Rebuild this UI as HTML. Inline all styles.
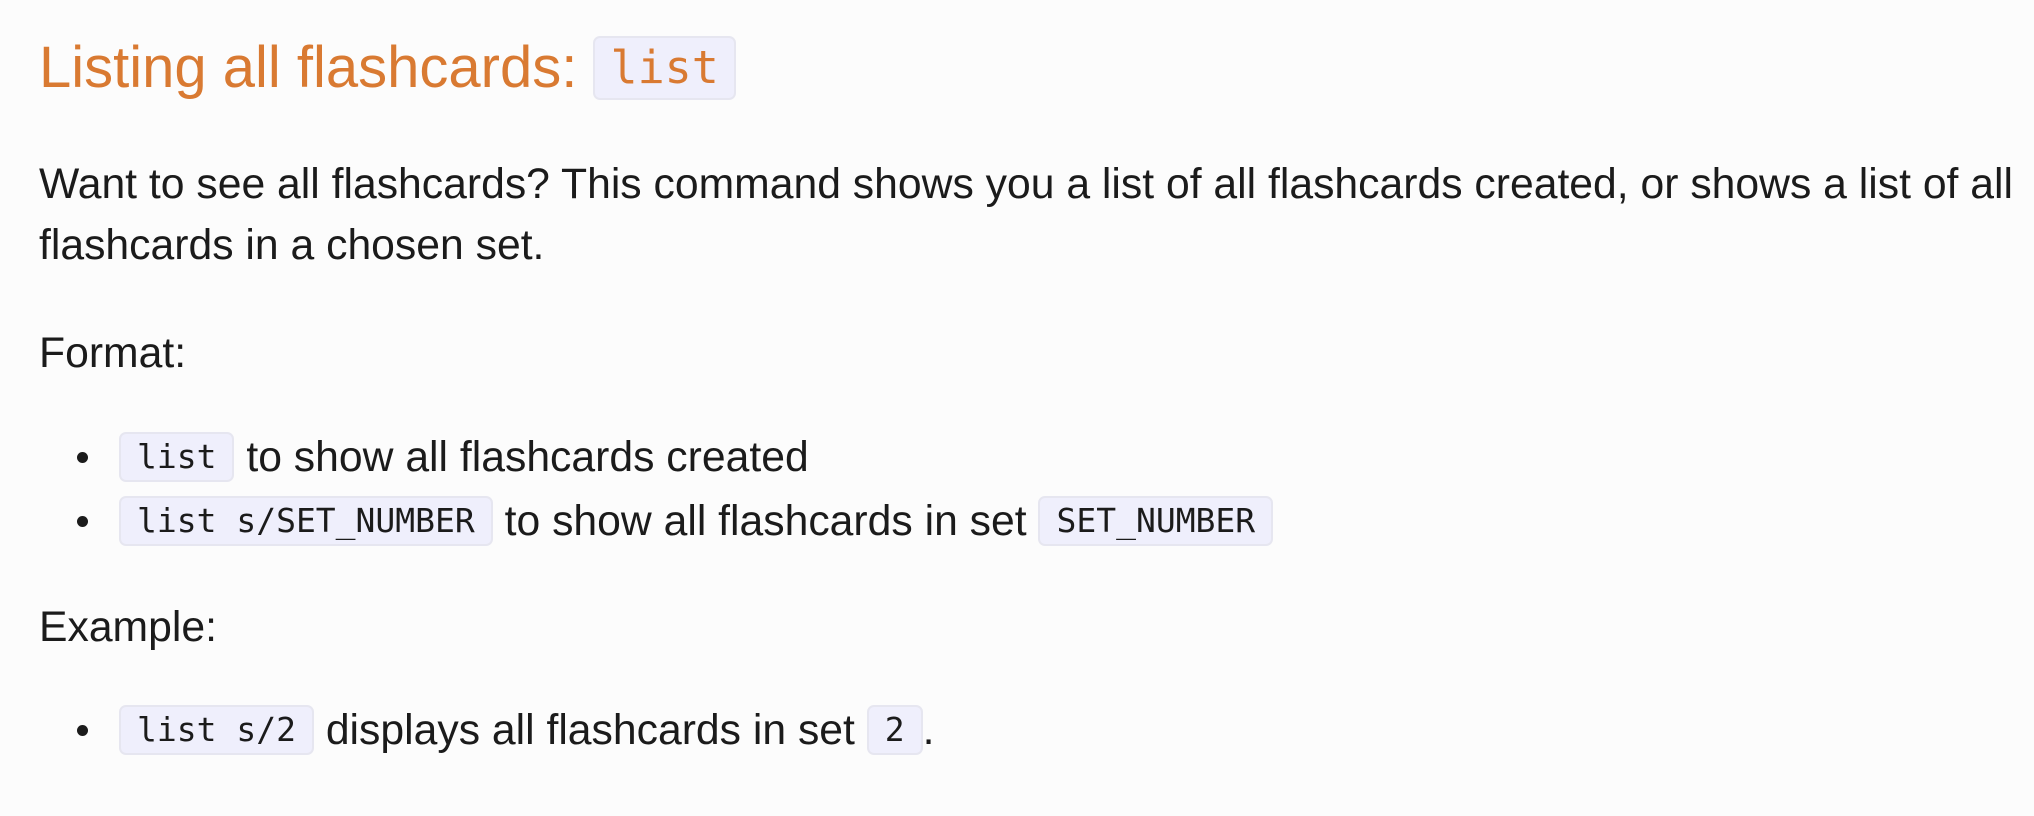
<!DOCTYPE html>
<html><head><meta charset="utf-8"><style>
html,body{margin:0;padding:0;background:#fcfcfc;width:2034px;height:816px;overflow:hidden}
body{font-family:"Liberation Sans",sans-serif;color:#1b1b1b;position:relative}
.l{position:absolute;left:39px;white-space:nowrap;font-size:42.7px;line-height:50px}
code{font-family:"DejaVu Sans Mono","Liberation Mono",monospace;font-size:33px;background:#efeffc;border:2px solid #e6e6f0;border-radius:7px;padding:3px 16px;display:inline-block;line-height:40px;vertical-align:middle;position:relative;top:-3px}
h1{position:absolute;left:39px;top:28px;margin:0;font-weight:normal;font-size:58px;color:#d97a32;line-height:80px;white-space:nowrap}
h1 code{font-size:45px;line-height:56px;padding:2px 15px;color:#d97a32;top:-4px}
.b{position:absolute;left:77px;width:11px;height:11px;border-radius:50%;background:#1b1b1b}
</style></head><body>
<h1>Listing all flashcards: <code>list</code></h1>
<div class="l" style="top:159px">Want to see all flashcards? This command shows you a list of all flashcards created, or shows a list of all</div>
<div class="l" style="top:220px">flashcards in a chosen set.</div>
<div class="l" style="top:328px">Format:</div>
<div class="b" style="top:452px"></div>
<div class="l" style="left:119px;top:432px"><code>list</code> to show all flashcards created</div>
<div class="b" style="top:516px"></div>
<div class="l" style="left:119px;top:496px"><code>list s/SET_NUMBER</code> to show all flashcards in set <code>SET_NUMBER</code></div>
<div class="l" style="top:602px">Example:</div>
<div class="b" style="top:725px"></div>
<div class="l" style="left:119px;top:705px"><code>list s/2</code> displays all flashcards in set <code>2</code>.</div>
</body></html>
